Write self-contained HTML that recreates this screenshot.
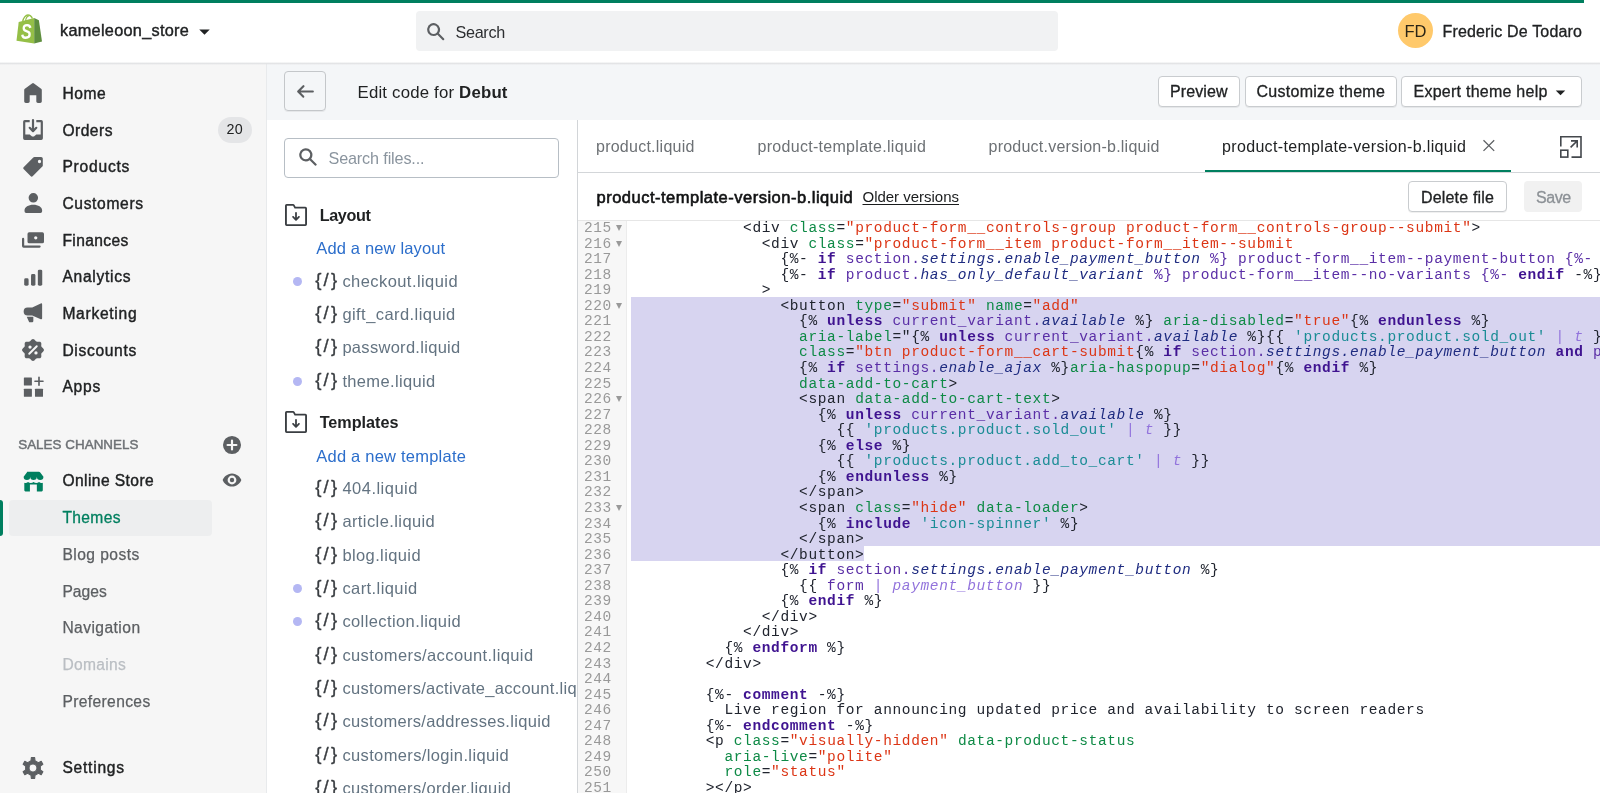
<!DOCTYPE html><html lang="en"><head><meta charset="utf-8"><title>kameleoon_store ~ Edit code ~ Shopify</title><style>
*{box-sizing:border-box;margin:0;padding:0}
html,body{width:1600px;height:793px;overflow:hidden;background:#f6f6f6;font-family:"Liberation Sans",Arial,sans-serif}
#root{position:absolute;left:0;top:0;width:1600px;height:793px;will-change:transform}
.t{position:absolute;white-space:nowrap;height:24px;line-height:24px}
.abs{position:absolute}
.btn{position:absolute;background:#fff;border:1px solid #c9cccf;border-radius:4px;box-shadow:0 1px 0 rgba(0,0,0,.06)}
#code{position:absolute;left:578px;top:221px;width:1022px;height:572px;overflow:hidden;background:#fff;font-family:"Liberation Mono","Courier New",monospace;font-size:14.5px;letter-spacing:0.637px}
#gutter{position:absolute;left:0;top:0;width:49px;height:572px;background:#f7f7f7;border-right:1.7px solid #ececec}
.ln{position:absolute;left:0;width:33.9px;text-align:right;color:#999;height:15.556px;line-height:15.556px;white-space:pre}
.fa{position:absolute;left:37.7px;width:0;height:0;border-left:3.2px solid transparent;border-right:3.2px solid transparent;border-top:6.2px solid #999}
.cl{position:absolute;left:53.0px;height:15.556px;line-height:15.556px;white-space:pre;color:#20242e}
.sel{position:absolute;background:#d7d4f0}
.a{color:#0e8a46}.s{color:#dc3515}.k{color:#3f1390;font-weight:bold}.v{color:#5a2ea6}.p{color:#1e2b80;font-style:italic}
.q{color:#1a8c95}.f{color:#9273dc}.fi{color:#9273dc;font-style:italic}.d{color:#20242e}
</style></head><body><div id="root"><div class="abs" style="left:0;top:61px;width:267px;height:732px;background:#f6f6f6;border-right:1.500px solid #e8eaec"></div><div class="abs" style="left:267px;top:61px;width:1333px;height:59px;background:#f4f6f8"></div><div class="abs" style="left:0;top:0;width:1600px;height:61.500px;background:#fff"></div><div class="abs" style="left:0;top:61.500px;width:1600px;height:3.600px;background:linear-gradient(to bottom,#fff 0%,#e1e2e4 45%,rgba(225,226,228,0) 100%)"></div>
<div class="abs" style="left:0;top:0;width:1584px;height:3px;background:#007f5f"></div>
<svg style="position:absolute;left:15px;top:13px" width="28" height="32" viewBox="0 0 28 32"><path d="M7.600 8.600C8.300 4.800 10.800 2 12.900 2c1.900 0 3.600 1.400 4.500 3.600" stroke="#95bf47" stroke-width="1.400" fill="none"/><path d="M10.500 7.800C11 5.200 12.300 3.200 13.800 2.900" stroke="#95bf47" stroke-width="1.100" fill="none"/><path d="M3.700 9.100L19.200 5v25.500L1.500 27.700z" fill="#95bf47"/><path d="M19.200 5l4.700 2.200L27 28.600l-7.800 1.900z" fill="#5e8e3e"/><text transform="translate(6 25.800) scale(.74 1)" font-family="Liberation Sans, Arial, sans-serif" font-weight="bold" font-style="italic" font-size="21.500" fill="#fff">S</text></svg>
<div class="t" style="left:60.00px;top:18.00px;font-size:16.30px;color:#202223;-webkit-text-stroke:0.40px #202223;letter-spacing:0.282px;">kameleoon_store</div>
<svg style="position:absolute;left:194.00px;top:20.50px" width="21.00" height="21.00" viewBox="0 0 20 20" fill="#202223" ><path d="M5 8l5 5 5-5z"/></svg>
<div class="abs" style="left:416px;top:11px;width:641.500px;height:40px;background:#f1f2f3;border-radius:4px"></div>
<svg style="position:absolute;left:424.50px;top:20.50px" width="21.50" height="21.50" viewBox="0 0 20 20" fill="#5c5f62" ><path d="M8 12a4 4 0 1 1 0-8 4 4 0 0 1 0 8zm9.700 4.300l-4.800-4.800A6 6 0 1 0 8 14a5.970 5.970 0 0 0 3.500-1.100l4.800 4.800a1 1 0 0 0 1.400-1.400z"/></svg>
<div class="t" style="left:455.50px;top:20.00px;font-size:16.20px;color:#2c2e30;letter-spacing:-0.327px;">Search</div>
<div class="abs" style="left:1397.500px;top:12.900px;width:35.500px;height:35.500px;border-radius:50%;background:#ffc96b"></div>
<div class="t" style="left:1404.50px;top:19.00px;font-size:16.50px;color:#2a2416;">FD</div>
<div class="t" style="left:1442.50px;top:20.00px;font-size:16.00px;color:#202223;-webkit-text-stroke:0.30px #202223;letter-spacing:0.163px;">Frederic De Todaro</div>
<svg style="position:absolute;left:22.00px;top:82.20px" width="22.00" height="22.00" viewBox="0 0 20 20" fill="#5c5f62" ><path d="M18 7.26V17.5c0 .84-.67 1.5-1.5 1.5h-2c-.83 0-1.5-.66-1.5-1.5V12H7v5.500c0 .84-.67 1.5-1.5 1.500h-2C2.670 19 2 18.340 2 17.500V7.260c0-.48.23-.93.62-1.210l6.500-4.760a1.500 1.500 0 0 1 1.770 0l6.500 4.760c.39.280.61.730.61 1.210z"/></svg><div class="t" style="left:62.40px;top:82.00px;font-size:15.60px;color:#202223;-webkit-text-stroke:0.40px #202223;letter-spacing:0.540px;">Home</div>
<svg style="position:absolute;left:22.00px;top:119.00px" width="22.00" height="22.00" viewBox="0 0 20 20" fill="#5c5f62" ><path d="M11 1a1 1 0 1 0-2 0v7.586L7.707 7.293a1 1 0 0 0-1.414 1.414l3 3a1 1 0 0 0 1.414 0l3-3a1 1 0 0 0-1.414-1.414L11 8.586V1z"/><path d="M3 14V3h4V1H2.500A1.500 1.500 0 0 0 1 2.500v15A1.500 1.500 0 0 0 2.500 19h15a1.500 1.500 0 0 0 1.500-1.500v-15A1.500 1.500 0 0 0 17.500 1H13v2h4v11h-3.500c-.78 0-1.390.66-1.930 1.240l-.11.120A1.990 1.990 0 0 1 10 16a1.990 1.990 0 0 1-1.460-.64l-.11-.12C7.890 14.660 7.280 14 6.500 14H3z"/></svg><div class="t" style="left:62.40px;top:119.00px;font-size:15.60px;color:#202223;-webkit-text-stroke:0.40px #202223;letter-spacing:0.478px;">Orders</div>
<svg style="position:absolute;left:23.20px;top:155.60px" width="22.00" height="22.00" viewBox="0 0 20 20" fill="#5c5f62" ><path fill-rule="evenodd" d="M10.410 1h6.090c.83 0 1.500.67 1.500 1.500v6.090c0 .4-.16.780-.44 1.060l-8.590 8.590a1.500 1.500 0 0 1-2.120 0L.76 12.150a1.500 1.500 0 0 1 0-2.120l8.590-8.590c.28-.28.660-.44 1.060-.44zM15 6.500a1.500 1.500 0 1 0 0-3 1.500 1.500 0 0 0 0 3z"/></svg><div class="t" style="left:62.40px;top:155.00px;font-size:15.60px;color:#202223;-webkit-text-stroke:0.40px #202223;letter-spacing:0.780px;">Products</div>
<svg style="position:absolute;left:22.00px;top:192.30px" width="22.00" height="22.00" viewBox="0 0 20 20" fill="#5c5f62" ><path d="M14.600 5.300a4.300 4.300 0 1 1-8.600 0 4.300 4.300 0 0 1 8.600 0zM2.300 16.500c0-2.760 3.500-5 8-5s8 2.240 8 5v1a1.500 1.500 0 0 1-1.500 1.500h-13a1.500 1.500 0 0 1-1.500-1.500v-1z"/></svg><div class="t" style="left:62.40px;top:192.00px;font-size:15.60px;color:#202223;-webkit-text-stroke:0.40px #202223;letter-spacing:0.660px;">Customers</div>
<svg style="position:absolute;left:22.00px;top:229.00px" width="22.00" height="22.00" viewBox="0 0 20 20" fill="#5c5f62" ><path fill-rule="evenodd" d="M5 4.500A1.500 1.500 0 0 1 6.500 3h12A1.500 1.500 0 0 1 20 4.500v7a1.500 1.500 0 0 1-1.500 1.500h-12A1.500 1.500 0 0 1 5 11.500v-7zm7.500 5a1.500 1.500 0 1 0 0-3 1.500 1.500 0 0 0 0 3z"/><path d="M1 8a1 1 0 0 1 1 1v6h14a1 1 0 1 1 0 2H1.500A1.500 1.500 0 0 1 0 15.500V9a1 1 0 0 1 1-1z"/></svg><div class="t" style="left:62.40px;top:229.00px;font-size:15.60px;color:#202223;-webkit-text-stroke:0.40px #202223;letter-spacing:0.389px;">Finances</div>
<svg style="position:absolute;left:22.00px;top:265.60px" width="22.00" height="22.00" viewBox="0 0 20 20" fill="#5c5f62" ><rect x="2" y="11.200" width="4" height="6.800" rx="1.300"/><rect x="8.200" y="7.300" width="4" height="10.700" rx="1.300"/><rect x="14.400" y="3.300" width="4" height="14.700" rx="1.300"/></svg><div class="t" style="left:62.40px;top:265.00px;font-size:15.60px;color:#202223;-webkit-text-stroke:0.40px #202223;letter-spacing:0.717px;">Analytics</div>
<svg style="position:absolute;left:22.00px;top:302.30px" width="22.00" height="22.00" viewBox="0 0 20 20" fill="#5c5f62" ><path d="M18.300 2.200v12.600a.9.9 0 0 1-1.250.83L9.300 12.200H5.100A3.600 3.600 0 0 1 1.500 8.600 3.600 3.600 0 0 1 5.100 5h4.200l7.750-3.630a.9.9 0 0 1 1.250.83z"/><path d="M4.300 13.400h6v3.900a1.100 1.100 0 0 1-1.100 1.100H7.300a1.100 1.100 0 0 1-1.050-.77z"/></svg><div class="t" style="left:62.40px;top:302.00px;font-size:15.60px;color:#202223;-webkit-text-stroke:0.40px #202223;letter-spacing:0.721px;">Marketing</div>
<svg style="position:absolute;left:22.00px;top:339.00px" width="22.00" height="22.00" viewBox="0 0 20 20" fill="#5c5f62" ><path fill-rule="evenodd" d="M10.00 0.05L10.64 0.18L11.24 0.56L11.78 1.07L12.25 1.62L12.69 2.08L13.16 2.38L13.70 2.50L14.34 2.49L15.06 2.43L15.80 2.44L16.49 2.60L17.04 2.96L17.40 3.51L17.56 4.20L17.57 4.94L17.51 5.66L17.50 6.30L17.62 6.84L17.92 7.31L18.38 7.75L18.93 8.22L19.44 8.76L19.82 9.36L19.95 10.00L19.82 10.64L19.44 11.24L18.93 11.78L18.38 12.25L17.92 12.69L17.62 13.16L17.50 13.70L17.51 14.34L17.57 15.06L17.56 15.80L17.40 16.49L17.04 17.04L16.49 17.40L15.80 17.56L15.06 17.57L14.34 17.51L13.70 17.50L13.16 17.62L12.69 17.92L12.25 18.38L11.78 18.93L11.24 19.44L10.64 19.82L10.00 19.95L9.36 19.82L8.76 19.44L8.22 18.93L7.75 18.38L7.31 17.92L6.84 17.62L6.30 17.50L5.66 17.51L4.94 17.57L4.20 17.56L3.51 17.40L2.96 17.04L2.60 16.49L2.44 15.80L2.43 15.06L2.49 14.34L2.50 13.70L2.38 13.16L2.08 12.69L1.62 12.25L1.07 11.78L0.56 11.24L0.18 10.64L0.05 10.00L0.18 9.36L0.56 8.76L1.07 8.22L1.62 7.75L2.08 7.31L2.38 6.84L2.50 6.30L2.49 5.66L2.43 4.94L2.44 4.20L2.60 3.51L2.96 2.96L3.51 2.60L4.20 2.44L4.94 2.43L5.66 2.49L6.30 2.50L6.84 2.38L7.31 2.08L7.75 1.62L8.22 1.07L8.76 0.56L9.36 0.18z"/><circle cx="7.300" cy="7.300" r="1.500" fill="#f6f6f6"/><circle cx="12.700" cy="12.700" r="1.500" fill="#f6f6f6"/><path d="M6.600 13.400l6.800-6.800" stroke="#f6f6f6" stroke-width="1.800" stroke-linecap="round"/></svg><div class="t" style="left:62.40px;top:339.00px;font-size:15.60px;color:#202223;-webkit-text-stroke:0.40px #202223;letter-spacing:0.674px;">Discounts</div>
<svg style="position:absolute;left:22.00px;top:375.60px" width="22.00" height="22.00" viewBox="0 0 20 20" fill="#5c5f62" ><rect x="1.700" y="1.300" width="7.300" height="7.300" rx=".5"/><rect x="1.700" y="11.600" width="7.300" height="7.300" rx=".5"/><rect x="11.800" y="11.600" width="7.300" height="7.300" rx=".5"/><path d="M15.450 1.200v7.200M11.800 4.800h7.300" stroke="#5c5f62" stroke-width="1.500" stroke-linecap="round"/></svg><div class="t" style="left:62.40px;top:375.00px;font-size:15.60px;color:#202223;-webkit-text-stroke:0.40px #202223;letter-spacing:0.758px;">Apps</div>
<div class="abs" style="left:217.500px;top:117px;width:34.500px;height:26px;border-radius:13px;background:#e4e5e7"></div>
<div class="t" style="left:226.50px;top:117.00px;font-size:14.30px;color:#202223;letter-spacing:0.396px;">20</div>
<div class="t" style="left:18.20px;top:433.00px;font-size:13.40px;color:#6d7175;-webkit-text-stroke:0.45px #6d7175;letter-spacing:0.035px;">SALES CHANNELS</div>
<svg style="position:absolute;left:221.30px;top:433.70px" width="22.00" height="22.00" viewBox="0 0 20 20" fill="#5c5f62" ><path fill-rule="evenodd" d="M10 1.800a8.200 8.200 0 1 0 0 16.400 8.200 8.200 0 0 0 0-16.400zM9 6a1 1 0 0 1 2 0v3h3a1 1 0 0 1 0 2h-3v3a1 1 0 0 1-2 0v-3H6a1 1 0 0 1 0-2h3z"/></svg>
<svg style="position:absolute;left:22.00px;top:469.50px" width="22.00" height="22.00" viewBox="0 0 20 20" fill="#007f5f" ><path d="M4.700 1.500h10.600a1.500 1.500 0 0 1 1.300.75l2.900 3.950a3 3 0 0 1-6 0 3 3 0 0 1-6 0 3 3 0 0 1-6 0l2.900-3.950A1.500 1.500 0 0 1 4.700 1.500z"/><path d="M2.100 11.500c1 .5 2.300.3 3.400-.6 1.500 1.300 3.500 1.300 5 0 1.500 1.300 3.500 1.300 5 0 1.100.9 2.400 1.100 3.400.6v7a1 1 0 0 1-1 1h-4.400v-6.400H7.200v6.400H3.100a1 1 0 0 1-1-1z"/></svg><div class="t" style="left:62.40px;top:469.00px;font-size:15.60px;color:#202223;-webkit-text-stroke:0.40px #202223;letter-spacing:0.427px;">Online Store</div>
<svg style="position:absolute;left:221.00px;top:469.30px" width="22.00" height="22.00" viewBox="0 0 20 20" fill="#5c5f62" ><path fill-rule="evenodd" d="M10 4C5.500 4 2.300 7.600 1.500 10c.8 2.400 4 6 8.500 6s7.700-3.600 8.500-6C17.700 7.600 14.500 4 10 4zm0 10a4 4 0 1 1 0-8 4 4 0 0 1 0 8zm0-2a2 2 0 1 0 0-4 2 2 0 0 0 0 4z"/></svg>
<div class="abs" style="left:9px;top:500px;width:203px;height:35.500px;border-radius:4px;background:#edeeef"></div>
<div class="abs" style="left:0;top:500px;width:3px;height:35.500px;border-radius:0 4px 4px 0;background:#007f5f"></div>
<div class="t" style="left:62.40px;top:506.00px;font-size:15.60px;color:#007f5f;-webkit-text-stroke:0.30px #007f5f;letter-spacing:0.356px;">Themes</div>
<div class="t" style="left:62.40px;top:543.00px;font-size:15.60px;color:#5c5f62;-webkit-text-stroke:0.25px #5c5f62;letter-spacing:0.450px;">Blog posts</div>
<div class="t" style="left:62.40px;top:580.00px;font-size:15.60px;color:#5c5f62;-webkit-text-stroke:0.25px #5c5f62;letter-spacing:0.063px;">Pages</div>
<div class="t" style="left:62.40px;top:616.00px;font-size:15.60px;color:#5c5f62;-webkit-text-stroke:0.25px #5c5f62;letter-spacing:0.443px;">Navigation</div>
<div class="t" style="left:62.40px;top:653.00px;font-size:15.60px;color:#babec3;-webkit-text-stroke:0.25px #babec3;letter-spacing:0.318px;">Domains</div>
<div class="t" style="left:62.40px;top:690.00px;font-size:15.60px;color:#5c5f62;-webkit-text-stroke:0.25px #5c5f62;letter-spacing:0.374px;">Preferences</div>
<svg style="position:absolute;left:22.10px;top:756.70px" width="22.00" height="22.00" viewBox="0 0 20 20" fill="#5c5f62" ><path fill-rule="evenodd" stroke="#5c5f62" stroke-width="1" stroke-linejoin="round" d="M8.50 0.52L11.50 0.52L11.79 3.34L14.88 5.12L17.46 3.96L18.96 6.56L16.66 8.21L16.66 11.79L18.96 13.44L17.46 16.04L14.88 14.88L11.79 16.66L11.50 19.48L8.50 19.48L8.21 16.66L5.12 14.88L2.54 16.04L1.04 13.44L3.34 11.79L3.34 8.21L1.04 6.56L2.54 3.96L5.12 5.12L8.21 3.34zM6.40 10.00a3.60 3.60 0 1 0 7.20 0a3.60 3.60 0 1 0 -7.20 0z"/></svg><div class="t" style="left:62.40px;top:756.00px;font-size:15.60px;color:#202223;-webkit-text-stroke:0.40px #202223;letter-spacing:0.765px;">Settings</div>
<div class="btn" style="left:284.300px;top:71px;width:42.200px;height:40px;background:transparent;border-color:#c4c7ca"></div>
<svg style="position:absolute;left:295.00px;top:80.50px" width="21.00" height="21.00" viewBox="0 0 20 20" fill="#5c5f62" ><path d="M17 9H5.400l3.300-3.300a1 1 0 1 0-1.400-1.400l-5 5a1 1 0 0 0 0 1.400l5 5a1 1 0 0 0 1.400-1.400L5.400 11H17a1 1 0 1 0 0-2z"/></svg>
<div class="t" style="left:357.50px;top:81.00px;font-size:16.80px;color:#202223;letter-spacing:0.193px;">Edit code for <b>Debut</b></div>
<div class="btn" style="left:1158px;top:75.500px;width:82px;height:31px"></div>
<div class="t" style="left:1170.00px;top:80.00px;font-size:16.00px;color:#202223;-webkit-text-stroke:0.30px #202223;letter-spacing:0.091px;">Preview</div>
<div class="btn" style="left:1244.500px;top:75.500px;width:152px;height:31px"></div>
<div class="t" style="left:1256.50px;top:80.00px;font-size:16.00px;color:#202223;-webkit-text-stroke:0.30px #202223;letter-spacing:0.276px;">Customize theme</div>
<div class="btn" style="left:1401px;top:75.500px;width:181px;height:31px"></div>
<div class="t" style="left:1413.50px;top:80.00px;font-size:16.00px;color:#202223;-webkit-text-stroke:0.30px #202223;letter-spacing:0.251px;">Expert theme help</div>
<svg style="position:absolute;left:1551.00px;top:83.00px" width="19.00" height="19.00" viewBox="0 0 20 20" fill="#202223" ><path d="M5 8l5 5 5-5z"/></svg>
<div class="abs" style="left:267px;top:120px;width:1333px;height:673px;background:#fff"></div>
<div class="abs" style="left:577px;top:120px;width:1px;height:673px;background:#d2d5d8"></div>
<div class="abs" style="left:284px;top:137.800px;width:275.200px;height:40.200px;border:1.300px solid #b7bec5;border-radius:4px;background:#fff"></div>
<svg style="position:absolute;left:297.00px;top:145.80px" width="22.00" height="22.00" viewBox="0 0 20 20" fill="#5c5f62" ><path d="M8 12a4 4 0 1 1 0-8 4 4 0 0 1 0 8zm9.700 4.300l-4.800-4.800A6 6 0 1 0 8 14a5.970 5.970 0 0 0 3.500-1.100l4.800 4.800a1 1 0 0 0 1.400-1.400z"/></svg>
<div class="t" style="left:328.50px;top:146.00px;font-size:16.20px;color:#8a949e;letter-spacing:-0.143px;">Search files...</div>
<div class="abs" style="left:267px;top:120px;width:310px;height:673px;overflow:hidden">
<div class="abs" style="left:-267px;top:-120px;width:1600px;height:793px">
<svg style="position:absolute;left:284.60px;top:203.80px" width="22.00" height="22.00" viewBox="0 0 20 20" fill="#3a3e42" ><path fill-rule="evenodd" d="M0 1.500A1.500 1.500 0 0 1 1.500 0h5.800a1.500 1.500 0 0 1 1.300.75l1 1.750h8.900A1.500 1.500 0 0 1 20 4v14.500a1.500 1.500 0 0 1-1.500 1.500h-17A1.500 1.500 0 0 1 0 18.500zM1.700 1.700v16.600h16.600V4.200H8.700L7.300 1.700z"/><path d="M10.800 8a.8.800 0 0 0-1.600 0v4.500L7.700 11a.8.800 0 0 0-1.100 1.100l2.800 2.800a.8.800 0 0 0 1.200 0l2.800-2.800A.8.800 0 0 0 12.300 11l-1.500 1.500z"/></svg><div class="t" style="left:319.70px;top:203.00px;font-size:16.20px;color:#202223;font-weight:700;letter-spacing:-0.375px;">Layout</div>
<div class="t" style="left:316.30px;top:236.00px;font-size:16.50px;color:#2c6ecb;letter-spacing:0.155px;">Add a new layout</div>
<div class="abs" style="left:292.500px;top:276.6px;width:9px;height:9px;border-radius:50%;background:#b4b7f3"></div><div class="t" style="left:315.20px;top:268.00px;font-size:18.50px;color:#393d41;-webkit-text-stroke:0.35px #393d41;letter-spacing:2.240px;">{/}</div><div class="t" style="left:342.40px;top:269.00px;font-size:16.50px;color:#637381;letter-spacing:0.431px;">checkout.liquid</div>
<div class="t" style="left:315.20px;top:301.00px;font-size:18.50px;color:#393d41;-webkit-text-stroke:0.35px #393d41;letter-spacing:2.240px;">{/}</div><div class="t" style="left:342.40px;top:302.00px;font-size:16.50px;color:#637381;letter-spacing:0.432px;">gift_card.liquid</div>
<div class="t" style="left:315.20px;top:334.00px;font-size:18.50px;color:#393d41;-webkit-text-stroke:0.35px #393d41;letter-spacing:2.240px;">{/}</div><div class="t" style="left:342.40px;top:335.00px;font-size:16.50px;color:#637381;letter-spacing:0.294px;">password.liquid</div>
<div class="abs" style="left:292.500px;top:376.6px;width:9px;height:9px;border-radius:50%;background:#b4b7f3"></div><div class="t" style="left:315.20px;top:368.00px;font-size:18.50px;color:#393d41;-webkit-text-stroke:0.35px #393d41;letter-spacing:2.240px;">{/}</div><div class="t" style="left:342.40px;top:369.00px;font-size:16.50px;color:#637381;letter-spacing:0.349px;">theme.liquid</div>
<svg style="position:absolute;left:284.60px;top:410.80px" width="22.00" height="22.00" viewBox="0 0 20 20" fill="#3a3e42" ><path fill-rule="evenodd" d="M0 1.500A1.500 1.500 0 0 1 1.500 0h5.800a1.500 1.500 0 0 1 1.300.75l1 1.750h8.900A1.500 1.500 0 0 1 20 4v14.500a1.500 1.500 0 0 1-1.500 1.500h-17A1.500 1.500 0 0 1 0 18.500zM1.700 1.700v16.600h16.600V4.200H8.700L7.300 1.700z"/><path d="M10.800 8a.8.800 0 0 0-1.600 0v4.500L7.700 11a.8.800 0 0 0-1.100 1.100l2.800 2.800a.8.800 0 0 0 1.200 0l2.800-2.800A.8.800 0 0 0 12.300 11l-1.500 1.500z"/></svg><div class="t" style="left:319.70px;top:410.00px;font-size:16.20px;color:#202223;font-weight:700;letter-spacing:-0.021px;">Templates</div>
<div class="t" style="left:316.30px;top:444.00px;font-size:16.50px;color:#2c6ecb;letter-spacing:0.220px;">Add a new template</div>
<div class="t" style="left:315.20px;top:475.00px;font-size:18.50px;color:#393d41;-webkit-text-stroke:0.35px #393d41;letter-spacing:2.240px;">{/}</div><div class="t" style="left:342.40px;top:476.00px;font-size:16.50px;color:#637381;letter-spacing:0.490px;">404.liquid</div>
<div class="t" style="left:315.20px;top:508.00px;font-size:18.50px;color:#393d41;-webkit-text-stroke:0.35px #393d41;letter-spacing:2.240px;">{/}</div><div class="t" style="left:342.40px;top:509.00px;font-size:16.50px;color:#637381;letter-spacing:0.406px;">article.liquid</div>
<div class="t" style="left:315.20px;top:542.00px;font-size:18.50px;color:#393d41;-webkit-text-stroke:0.35px #393d41;letter-spacing:2.240px;">{/}</div><div class="t" style="left:342.40px;top:543.00px;font-size:16.50px;color:#637381;letter-spacing:0.389px;">blog.liquid</div>
<div class="abs" style="left:292.500px;top:584.0px;width:9px;height:9px;border-radius:50%;background:#b4b7f3"></div><div class="t" style="left:315.20px;top:575.00px;font-size:18.50px;color:#393d41;-webkit-text-stroke:0.35px #393d41;letter-spacing:2.240px;">{/}</div><div class="t" style="left:342.40px;top:576.00px;font-size:16.50px;color:#637381;letter-spacing:0.417px;">cart.liquid</div>
<div class="abs" style="left:292.500px;top:617.3px;width:9px;height:9px;border-radius:50%;background:#b4b7f3"></div><div class="t" style="left:315.20px;top:608.00px;font-size:18.50px;color:#393d41;-webkit-text-stroke:0.35px #393d41;letter-spacing:2.240px;">{/}</div><div class="t" style="left:342.40px;top:609.00px;font-size:16.50px;color:#637381;letter-spacing:0.400px;">collection.liquid</div>
<div class="t" style="left:315.20px;top:642.00px;font-size:18.50px;color:#393d41;-webkit-text-stroke:0.35px #393d41;letter-spacing:2.240px;">{/}</div><div class="t" style="left:342.40px;top:643.00px;font-size:16.50px;color:#637381;letter-spacing:0.396px;">customers/account.liquid</div>
<div class="t" style="left:315.20px;top:675.00px;font-size:18.50px;color:#393d41;-webkit-text-stroke:0.35px #393d41;letter-spacing:2.240px;">{/}</div><div class="t" style="left:342.40px;top:676.00px;font-size:16.50px;color:#637381;letter-spacing:0.300px;">customers/activate_account.liquid</div>
<div class="t" style="left:315.20px;top:708.00px;font-size:18.50px;color:#393d41;-webkit-text-stroke:0.35px #393d41;letter-spacing:2.240px;">{/}</div><div class="t" style="left:342.40px;top:709.00px;font-size:16.50px;color:#637381;letter-spacing:0.320px;">customers/addresses.liquid</div>
<div class="t" style="left:315.20px;top:742.00px;font-size:18.50px;color:#393d41;-webkit-text-stroke:0.35px #393d41;letter-spacing:2.240px;">{/}</div><div class="t" style="left:342.40px;top:743.00px;font-size:16.50px;color:#637381;letter-spacing:0.364px;">customers/login.liquid</div>
<div class="t" style="left:315.20px;top:775.00px;font-size:18.50px;color:#393d41;-webkit-text-stroke:0.35px #393d41;letter-spacing:2.240px;">{/}</div><div class="t" style="left:342.40px;top:776.00px;font-size:16.50px;color:#637381;letter-spacing:0.334px;">customers/order.liquid</div>
</div></div>
<div class="abs" style="left:578px;top:172.200px;width:1022px;height:1.300px;background:#d3d6d9"></div>
<div class="t" style="left:596.00px;top:135.00px;font-size:16.00px;color:#6d7175;letter-spacing:0.247px;">product.liquid</div>
<div class="t" style="left:757.50px;top:135.00px;font-size:16.00px;color:#6d7175;letter-spacing:0.294px;">product-template.liquid</div>
<div class="t" style="left:988.50px;top:135.00px;font-size:16.00px;color:#6d7175;letter-spacing:0.237px;">product.version-b.liquid</div>
<div class="t" style="left:1222.00px;top:135.00px;font-size:16.00px;color:#202223;letter-spacing:0.338px;">product-template-version-b.liquid</div>
<svg style="position:absolute;left:1481px;top:138px" width="16" height="16" viewBox="0 0 16 16"><path d="M2.500 2.200l10.700 10.700M13.200 2.200L2.500 12.900" stroke="#5c5f62" stroke-width="1.250" fill="none"/></svg>
<div class="abs" style="left:1204.500px;top:169.700px;width:306.500px;height:2.800px;background:#007f5f"></div>
<svg style="position:absolute;left:1560.200px;top:135.600px" width="22" height="22.500" viewBox="0 0 22 22.500" fill="none" stroke="#44484d" stroke-width="1.600"><path d="M.8 10.600V.8H21v20.300h-9.500"/><rect x=".8" y="14.200" width="7" height="6.900"/><path d="M10.600 11.400l6.200-6.200M11 4.900h6.200v6.500"/></svg>
<div class="t" style="left:596.50px;top:185.00px;font-size:16.50px;color:#111213;-webkit-text-stroke:0.60px #111213;letter-spacing:0.499px;">product-template-version-b.liquid</div>
<div class="t" style="left:862.50px;top:185.00px;font-size:15.00px;color:#1a1c1d;letter-spacing:-0.015px;text-decoration:underline;text-underline-offset:1.500px;">Older versions</div>
<div class="btn" style="left:1408px;top:181px;width:98.500px;height:31px"></div>
<div class="t" style="left:1421.00px;top:186.00px;font-size:16.00px;color:#202223;-webkit-text-stroke:0.30px #202223;letter-spacing:0.176px;">Delete file</div>
<div class="abs" style="left:1524px;top:181px;width:58px;height:31px;border-radius:4px;background:#f1f1f1"></div>
<div class="t" style="left:1536.00px;top:186.00px;font-size:16.00px;color:#8c9196;-webkit-text-stroke:0.30px #8c9196;letter-spacing:-0.420px;">Save</div>
<div class="abs" style="left:578px;top:220px;width:1022px;height:1px;background:#e6e6e6"></div>
<div id="code"><div id="gutter"></div><div class="sel" style="left:53px;top:75.68px;width:970px;height:248.90px"></div><div class="sel" style="left:53px;top:324.08px;width:233.20px;height:16.06px"></div><div class="ln" style="top:-0.05px">215</div><div class="fa" style="top:4.25px"></div><div class="cl" style="top:-0.05px">            &lt;div <span class="a">class</span>=<span class="s">"product-form__controls-group product-form__controls-group--submit"</span>&gt;</div><div class="ln" style="top:15.51px">216</div><div class="fa" style="top:19.81px"></div><div class="cl" style="top:15.51px">              &lt;div <span class="a">class</span>=<span class="s">"product-form__item product-form__item--submit</span></div><div class="ln" style="top:31.06px">217</div><div class="cl" style="top:31.06px">                {%-<span class="k"> if </span><span class="v">section.</span><span class="p">settings.enable_payment_button</span><span class="v"> %} product-form__item--payment-button {%- </span><span class="k">endif</span> -%}</div><div class="ln" style="top:46.62px">218</div><div class="cl" style="top:46.62px">                {%-<span class="k"> if </span><span class="v">product.</span><span class="p">has_only_default_variant</span><span class="v"> %} product-form__item--no-variants {%- </span><span class="k">endif</span> -%}<span class="s">"</span></div><div class="ln" style="top:62.17px">219</div><div class="cl" style="top:62.17px">              &gt;</div><div class="ln" style="top:77.73px">220</div><div class="fa" style="top:82.03px"></div><div class="cl" style="top:77.73px">                &lt;button <span class="a">type</span>=<span class="s">"submit"</span> <span class="a">name</span>=<span class="s">"add"</span></div><div class="ln" style="top:93.29px">221</div><div class="cl" style="top:93.29px">                  {% <span class="k">unless </span><span class="v">current_variant.</span><span class="p">available</span> %} <span class="a">aria-disabled</span>=<span class="s">"true"</span>{% <span class="k">endunless</span> %}</div><div class="ln" style="top:108.84px">222</div><div class="cl" style="top:108.84px">                  <span class="a">aria-label</span>="{% <span class="k">unless </span><span class="v">current_variant.</span><span class="p">available</span> %}{{ <span class="q">'products.product.sold_out'</span><span class="f"> | </span><span class="fi">t</span> }}{% <span class="k">else</span> %}{{ <span class="q">'products.product.add_to_cart'</span><span class="f"> | </span><span class="fi">t</span> }}{% <span class="k">endunless</span> %}<span class="s">"</span></div><div class="ln" style="top:124.40px">223</div><div class="cl" style="top:124.40px">                  <span class="a">class</span>=<span class="s">"btn product-form__cart-submit</span>{% <span class="k">if </span><span class="v">section.</span><span class="p">settings.enable_payment_button</span><span class="k"> and </span><span class="v">product.</span><span class="p">selling_plan_groups</span> == <span class="k">empty</span> %}<span class="s"> btn--secondary-accent</span>{% <span class="k">endif</span> %}<span class="s">"</span></div><div class="ln" style="top:139.95px">224</div><div class="cl" style="top:139.95px">                  {% <span class="k">if </span><span class="v">settings.</span><span class="p">enable_ajax</span> %}<span class="a">aria-haspopup</span>=<span class="s">"dialog"</span>{% <span class="k">endif</span> %}</div><div class="ln" style="top:155.51px">225</div><div class="cl" style="top:155.51px">                  <span class="a">data-add-to-cart</span>&gt;</div><div class="ln" style="top:171.07px">226</div><div class="fa" style="top:175.37px"></div><div class="cl" style="top:171.07px">                  &lt;span <span class="a">data-add-to-cart-text</span>&gt;</div><div class="ln" style="top:186.62px">227</div><div class="cl" style="top:186.62px">                    {% <span class="k">unless </span><span class="v">current_variant.</span><span class="p">available</span> %}</div><div class="ln" style="top:202.18px">228</div><div class="cl" style="top:202.18px">                      {{ <span class="q">'products.product.sold_out'</span><span class="f"> | </span><span class="fi">t</span> }}</div><div class="ln" style="top:217.73px">229</div><div class="cl" style="top:217.73px">                    {% <span class="k">else</span> %}</div><div class="ln" style="top:233.29px">230</div><div class="cl" style="top:233.29px">                      {{ <span class="q">'products.product.add_to_cart'</span><span class="f"> | </span><span class="fi">t</span> }}</div><div class="ln" style="top:248.85px">231</div><div class="cl" style="top:248.85px">                    {% <span class="k">endunless</span> %}</div><div class="ln" style="top:264.40px">232</div><div class="cl" style="top:264.40px">                  &lt;/span&gt;</div><div class="ln" style="top:279.96px">233</div><div class="fa" style="top:284.26px"></div><div class="cl" style="top:279.96px">                  &lt;span <span class="a">class</span>=<span class="s">"hide"</span> <span class="a">data-loader</span>&gt;</div><div class="ln" style="top:295.51px">234</div><div class="cl" style="top:295.51px">                    {% <span class="k">include </span><span class="q">'icon-spinner'</span> %}</div><div class="ln" style="top:311.07px">235</div><div class="cl" style="top:311.07px">                  &lt;/span&gt;</div><div class="ln" style="top:326.63px">236</div><div class="cl" style="top:326.63px">                &lt;/button&gt;</div><div class="ln" style="top:342.18px">237</div><div class="cl" style="top:342.18px">                {% <span class="k">if </span><span class="v">section.</span><span class="p">settings.enable_payment_button</span> %}</div><div class="ln" style="top:357.74px">238</div><div class="cl" style="top:357.74px">                  {{ <span class="v">form</span><span class="f"> | </span><span class="fi">payment_button</span> }}</div><div class="ln" style="top:373.29px">239</div><div class="cl" style="top:373.29px">                {% <span class="k">endif</span> %}</div><div class="ln" style="top:388.85px">240</div><div class="cl" style="top:388.85px">              &lt;/div&gt;</div><div class="ln" style="top:404.41px">241</div><div class="cl" style="top:404.41px">            &lt;/div&gt;</div><div class="ln" style="top:419.96px">242</div><div class="cl" style="top:419.96px">          {% <span class="k">endform</span> %}</div><div class="ln" style="top:435.52px">243</div><div class="cl" style="top:435.52px">        &lt;/div&gt;</div><div class="ln" style="top:451.07px">244</div><div class="ln" style="top:466.63px">245</div><div class="cl" style="top:466.63px">        {%- <span class="k">comment</span> -%}</div><div class="ln" style="top:482.19px">246</div><div class="cl" style="top:482.19px">          Live region for announcing updated price and availability to screen readers</div><div class="ln" style="top:497.74px">247</div><div class="cl" style="top:497.74px">        {%- <span class="k">endcomment</span> -%}</div><div class="ln" style="top:513.30px">248</div><div class="cl" style="top:513.30px">        &lt;p <span class="a">class</span>=<span class="s">"visually-hidden"</span> <span class="a">data-product-status</span></div><div class="ln" style="top:528.85px">249</div><div class="cl" style="top:528.85px">          <span class="a">aria-live</span>=<span class="s">"polite"</span></div><div class="ln" style="top:544.41px">250</div><div class="cl" style="top:544.41px">          <span class="a">role</span>=<span class="s">"status"</span></div><div class="ln" style="top:559.97px">251</div><div class="cl" style="top:559.97px">        &gt;&lt;/p&gt;</div></div></div></body></html>
